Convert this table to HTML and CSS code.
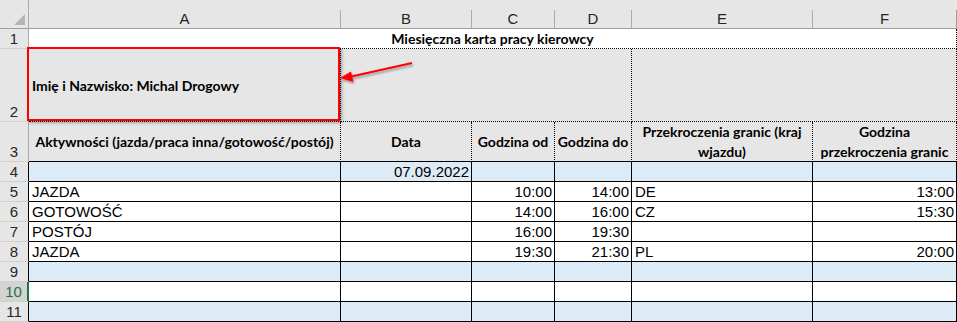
FILE: index.html
```html
<!DOCTYPE html>
<html lang="pl">
<head>
<meta charset="utf-8">
<title>Miesięczna karta pracy kierowcy</title>
<link rel="stylesheet" href="styles.css">
</head>
<body>
<div class="wrap">
  <div class="sheet">
    <div class="corner"><span class="tri"></span></div>
    <div class="ch">A</div>
    <div class="ch">B</div>
    <div class="ch">C</div>
    <div class="ch">D</div>
    <div class="ch">E</div>
    <div class="ch last">F</div>

    <div class="rh r1">1</div>
    <div class="c title">Miesięczna karta pracy kierowcy</div>

    <div class="rh r2">2</div>
    <div class="c g name">Imię i Nazwisko: Michal Drogowy</div>
    <div class="c g span3"></div>
    <div class="c g span2 dr"></div>

    <div class="rh r3">3</div>
    <div class="c g hd">Aktywności (jazda/praca inna/gotowość/postój)</div>
    <div class="c g hd">Data</div>
    <div class="c g hd">Godzina od</div>
    <div class="c g hd">Godzina do</div>
    <div class="c g hd">Przekroczenia granic (kraj wjazdu)</div>
    <div class="c g hd">Godzina przekroczenia granic</div>

    <div class="rh b">4</div>
    <div class="c d blue"></div>
    <div class="c d blue num">07.09.2022</div>
    <div class="c d blue"></div>
    <div class="c d blue"></div>
    <div class="c d blue"></div>
    <div class="c d blue"></div>

    <div class="rh b">5</div>
    <div class="c d">JAZDA</div>
    <div class="c d"></div>
    <div class="c d num">10:00</div>
    <div class="c d num">14:00</div>
    <div class="c d">DE</div>
    <div class="c d num">13:00</div>

    <div class="rh b">6</div>
    <div class="c d">GOTOWOŚĆ</div>
    <div class="c d"></div>
    <div class="c d num">14:00</div>
    <div class="c d num">16:00</div>
    <div class="c d">CZ</div>
    <div class="c d num">15:30</div>

    <div class="rh b">7</div>
    <div class="c d">POSTÓJ</div>
    <div class="c d"></div>
    <div class="c d num">16:00</div>
    <div class="c d num">19:30</div>
    <div class="c d"></div>
    <div class="c d"></div>

    <div class="rh b">8</div>
    <div class="c d">JAZDA</div>
    <div class="c d"></div>
    <div class="c d num">19:30</div>
    <div class="c d num">21:30</div>
    <div class="c d">PL</div>
    <div class="c d num">20:00</div>

    <div class="rh b">9</div>
    <div class="c d blue"></div>
    <div class="c d blue"></div>
    <div class="c d blue"></div>
    <div class="c d blue"></div>
    <div class="c d blue"></div>
    <div class="c d blue"></div>

    <div class="rh sel">10</div>
    <div class="c d"></div>
    <div class="c d"></div>
    <div class="c d"></div>
    <div class="c d"></div>
    <div class="c d"></div>
    <div class="c d"></div>

    <div class="rh b">11</div>
    <div class="c d blue"></div>
    <div class="c d blue"></div>
    <div class="c d blue"></div>
    <div class="c d blue"></div>
    <div class="c d blue"></div>
    <div class="c d blue"></div>
  </div>

  <div class="redbox"></div>
  <svg class="arrow" width="90" height="40" viewBox="0 0 90 40">
    <defs>
      <filter id="sh" x="-20%" y="-50%" width="140%" height="200%">
        <feDropShadow dx="1" dy="2" stdDeviation="1.2" flood-color="#000" flood-opacity="0.35"/>
      </filter>
    </defs>
    <g filter="url(#sh)">
      <line x1="77" y1="8" x2="14" y2="22" stroke="#ff0000" stroke-width="2"/>
      <polygon points="5,23 16,16.5 18.5,27" fill="#ff0000"/>
    </g>
  </svg>
</div>
</body>
</html>
```

FILE: styles.css
```css
html, body {
  margin: 0;
  padding: 0;
  background: #ffffff;
}

.wrap {
  position: relative;
  width: 957px;
  height: 322px;
  overflow: hidden;
}

.sheet {
  display: grid;
  grid-template-columns: 29px 312px 131px 83px 77px 181px 144px;
  grid-template-rows: 29px 20px 73px 40px repeat(8, 20px);
  background: #e6e6e6;
  font-family: "Liberation Sans", Arial, sans-serif;
  font-size: 15px;
  color: #000;
}

.corner {
  box-sizing: border-box;
  border-right: 1px solid #ababab;
  border-bottom: 1px solid #9e9e9e;
  background: #e6e6e6;
  position: relative;
}

.tri {
  position: absolute;
  right: 3px;
  bottom: 3px;
  width: 0;
  height: 0;
  border-left: 11px solid transparent;
  border-bottom: 11px solid #b6b6b6;
}

.ch {
  box-sizing: border-box;
  margin-top: 10px;
  border-right: 1px solid #ababab;
  border-bottom: 1px solid #9e9e9e;
  display: flex;
  align-items: center;
  justify-content: center;
  font-size: 15px;
  color: #262626;
  line-height: 18px;
}

.ch.last {
  border-right-color: #9e9e9e;
}

.rh {
  box-sizing: border-box;
  border-right: 1px solid #ababab;
  border-bottom: 1px solid #d0d0d0;
  display: flex;
  align-items: flex-end;
  justify-content: center;
  font-size: 15px;
  line-height: 19px;
  color: #262626;
  background: #e6e6e6;
}

.rh.b {
  border-right-color: #000;
}

.rh.sel {
  background: #d3d3d3;
  color: #217346;
  border-right: 2px solid #217346;
}

.c {
  box-sizing: border-box;
  overflow: hidden;
  white-space: nowrap;
}

.title {
  grid-column: 2 / span 6;
  background: #ffffff;
  border-bottom: 1px dotted #000;
  border-right: 1px dotted #000;
  font-family: Lato, "Liberation Sans", sans-serif;
  font-weight: 700;
  font-size: 14px;
  display: flex;
  align-items: center;
  justify-content: center;
}

.g {
  background: #e6e6e6;
  border-right: 1px dotted #000;
  border-bottom: 1px dotted #000;
}

.name {
  display: flex;
  align-items: center;
  padding-left: 3px;
  font-family: Lato, "Liberation Sans", sans-serif;
  font-weight: 700;
  font-size: 14px;
}

.span3 {
  grid-column: span 3;
}

.span2 {
  grid-column: span 2;
}

.hd {
  border-bottom: 1px solid #000;
  display: flex;
  align-items: center;
  justify-content: center;
  text-align: center;
  white-space: normal;
  font-family: Lato, "Liberation Sans", sans-serif;
  font-weight: 700;
  font-size: 14px;
  line-height: 20px;
  padding: 0 2px;
}

.d {
  background: #ffffff;
  border-right: 1px solid #000;
  border-bottom: 1px solid #000;
  padding: 0 2px 0 3px;
  line-height: 19px;
}

.d.blue {
  background: #ddebf7;
}

.num {
  text-align: right;
}

.redbox {
  position: absolute;
  left: 27px;
  top: 47px;
  width: 313px;
  height: 74px;
  box-sizing: border-box;
  border: 2px solid #ff0000;
  box-shadow: 2px 2px 3px rgba(0, 0, 0, 0.3);
}

.arrow {
  position: absolute;
  left: 335px;
  top: 55px;
}
```
